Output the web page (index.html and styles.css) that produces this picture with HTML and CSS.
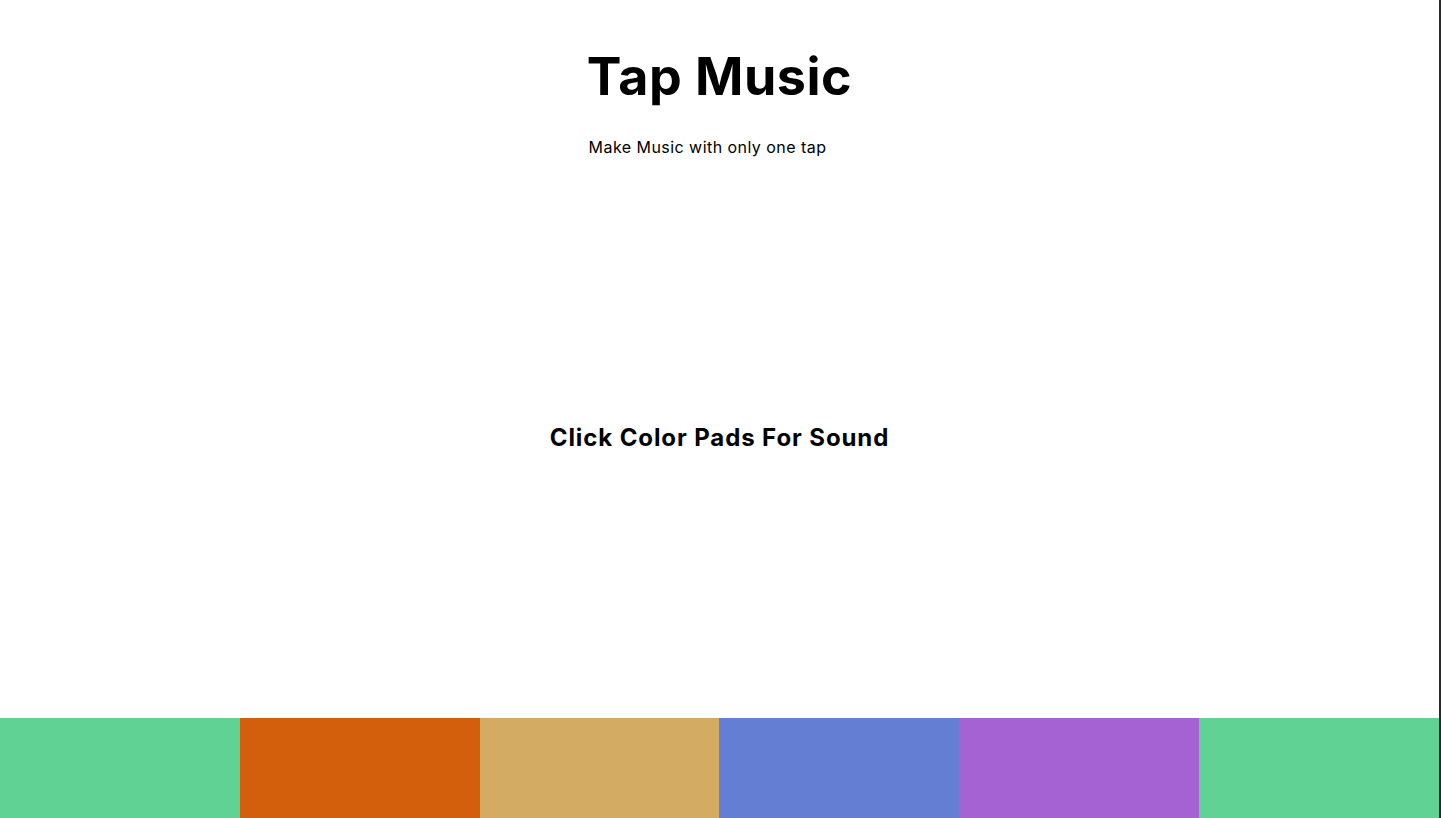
FILE: index.html
```html
<!DOCTYPE html>
<html lang="en">
<head>
<meta charset="utf-8">
<title>Tap Music</title>
<link rel="stylesheet" href="styles.css">
</head>
<body>
  <div class="app">
    <header class="header">
      <h1 class="title">Tap Music</h1>
      <p class="subtitle">Make Music with only one tap</p>
    </header>
    <main class="visual">
      <h3 class="hint">Click Color Pads For Sound</h3>
    </main>
    <div class="pads">
      <div class="pad pad-1"></div>
      <div class="pad pad-2"></div>
      <div class="pad pad-3"></div>
      <div class="pad pad-4"></div>
      <div class="pad pad-5"></div>
      <div class="pad pad-6"></div>
    </div>
  </div>
  <div class="edge"></div>
</body>
</html>
```

FILE: styles.css
```css
* { box-sizing: border-box; }
html, body { margin: 0; padding: 0; height: 100%; }
body {
  display: flex;
  font-family: Inter, "Open Sans", sans-serif;
  color: #000;
  background: #fff;
  overflow: hidden;
}
.app {
  flex: 1;
  display: flex;
  flex-direction: column;
  height: 100vh;
}
.edge {
  width: 2px;
  background: #262a33;
}
.header {
  display: flex;
  flex-direction: column;
  align-items: center;
  padding-top: 45px;
}
.title {
  margin: 0;
  font-size: 52px;
  line-height: 64px;
  font-weight: 700;
  letter-spacing: 0.5px;
}
.subtitle {
  margin: 28px 24px 0 0;
  font-size: 16px;
  line-height: 20px;
  letter-spacing: 0.45px;
}
.visual {
  flex: 1;
  display: flex;
  align-items: center;
  justify-content: center;
}
.hint {
  margin: 0;
  font-size: 24px;
  font-weight: 700;
  letter-spacing: 0.9px;
}
.pads {
  display: flex;
  height: 100px;
}
.pad { flex: 1; }
.pad-1 { background: #60d394; }
.pad-2 { background: #d35f0c; }
.pad-3 { background: #d3ab62; }
.pad-4 { background: #637ed3; }
.pad-5 { background: #a562d3; }
.pad-6 { background: #60d394; }
```
